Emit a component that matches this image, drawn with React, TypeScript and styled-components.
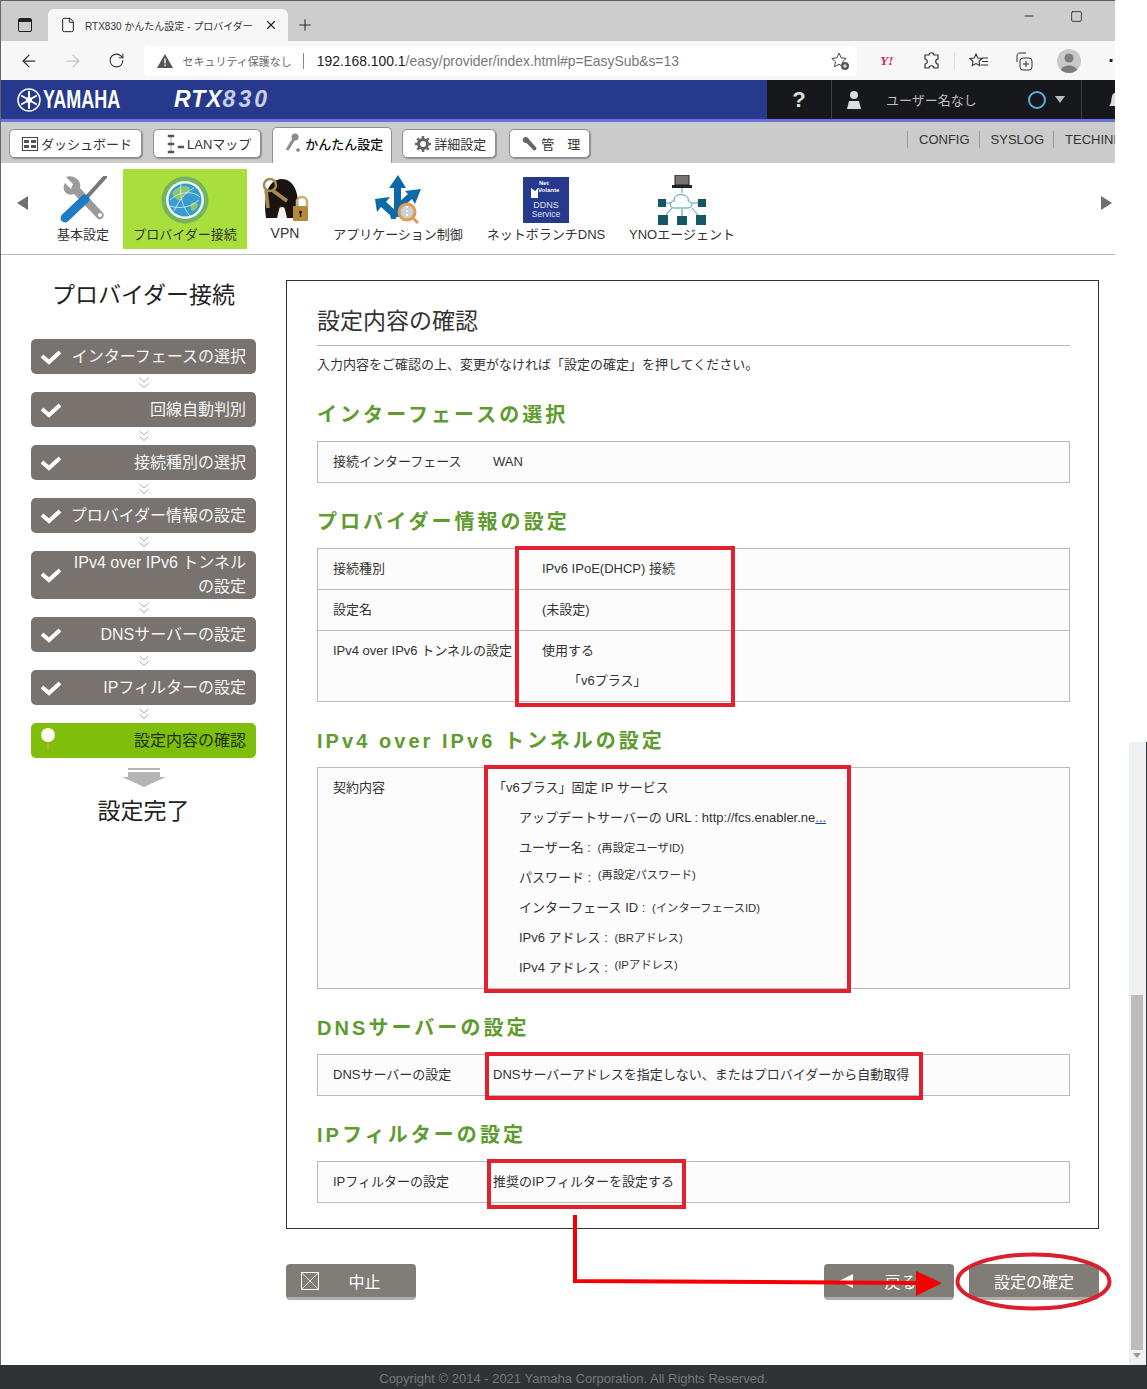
import styled, { createGlobalStyle } from "styled-components";
import { ArrowLeft, ArrowRight, File, Minus, Plus, RotateCw, Square, X } from "lucide-react";

const FONT = `"Liberation Sans", "Noto Sans CJK JP", sans-serif`;

const GlobalStyle = createGlobalStyle`
  html, body { margin: 0; padding: 0; background: #fff; }
  body { font-family: ${FONT}; color: #333; }
  * { box-sizing: border-box; }
`;

const steps = [
  { label: "インターフェースの選択" },
  { label: "回線自動判別" },
  { label: "接続種別の選択" },
  { label: "プロバイダー情報の設定" },
  { label: "IPv4 over IPv6 トンネル", second: "の設定" },
  { label: "DNSサーバーの設定" },
  { label: "IPフィルターの設定" },
];

function ToolsIcon() {
  return (
    <svg width="48" height="48" viewBox="0 0 48 48">
      <path d="M7 1l7 7-2 5-6-6C2 13 7 21 15 18l23 24c3 4 9-1 6-5L21 12C23 5 15-2 7 1z" fill="#9b9b9b" />
      <circle cx="41" cy="39" r="2" fill="#fff" />
      <path d="M46 1L28 21" stroke="#777" strokeWidth="4" strokeLinecap="round" />
      <path d="M26 23L6 42" stroke="#1d7cc4" strokeWidth="9" strokeLinecap="round" />
    </svg>
  );
}

function GlobeIcon() {
  return (
    <svg width="48" height="48" viewBox="0 0 48 48">
      <circle cx="24" cy="24" r="23.5" fill="#75b35c" />
      <circle cx="24" cy="24" r="19" fill="#eef8f2" />
      <circle cx="24" cy="24" r="16.5" fill="#3a9bd0" />
      <path d="M11 17c4-6 12-8 17-6 2 4-1 7-5 8-1 4-3 6-6 5-3-1-5-4-6-7zM31 27c3-1 6 0 6 2-1 4-4 6-6 6-2-2-2-6 0-8z" fill="#8cc76d" />
      <path d="M9 24c8-8 22-10 30-3M13 35c4-9 11-19 20-23M20 8c-2 11 2 24 9 32M9 30c9 3 20 2 29-6" stroke="#d6f0f2" strokeWidth="0.8" fill="none" />
    </svg>
  );
}

function VpnIcon() {
  return (
    <svg width="48" height="48" viewBox="0 0 48 48">
      <path d="M5 42C2 22 6 4 20 3c13 0 19 13 17 39z" fill="#1b1410" />
      <circle cx="21" cy="34" r="3" fill="#f4f1ec" />
      <path d="M16 42l2-8h6l2 8z" fill="#f4f1ec" />
      <circle cx="9" cy="9" r="6" fill="none" stroke="#a58a52" strokeWidth="2.5" />
      <path d="M11 14l15 11M5 14l2 18" stroke="#a58a52" strokeWidth="3.5" />
      <path d="M36 30v-4a5 5 0 0 1 10 0v4" fill="none" stroke="#c6ae76" strokeWidth="2.5" />
      <rect x="32" y="30" width="15" height="15" rx="1" fill="#b18a3e" />
      <circle cx="39.5" cy="36" r="1.6" fill="#2b1e0c" />
      <rect x="38.8" y="36" width="1.5" height="5" fill="#2b1e0c" />
    </svg>
  );
}

function AppIcon() {
  return (
    <svg width="50" height="50" viewBox="0 0 50 50">
      <path d="M25 0l8 13h-5v29h-7V13h-5z" fill="#0e6aa6" />
      <path d="M2 24l15-2-4 5 10 9v8h-5l-1-4-9-8-4 5zM48 14l-6 15-3-5-9 8-5-4 10-9-3-3z" fill="#0e6aa6" />
      <circle cx="34" cy="37" r="8" fill="#c9d2d2" stroke="#dd9a58" strokeWidth="3" />
      <path d="M34 31v12" stroke="#fff" strokeWidth="1.5" strokeDasharray="2 2" />
      <path d="M40 43l5 5" stroke="#dd9a58" strokeWidth="3" />
    </svg>
  );
}

function DdnsIcon() {
  return (
    <svg width="46" height="46" viewBox="0 0 46 46" fontFamily="Liberation Sans, sans-serif">
      <rect width="46" height="46" fill="#26398c" />
      <path d="M8 11l4 3 3-3v10H8z" fill="#fff" />
      <text x="16" y="8" fontSize="6" fontWeight="700" fill="#fff">Net</text>
      <text x="15" y="15" fontSize="6" fontWeight="700" fill="#fff">Volante</text>
      <text x="23" y="31" fontSize="9" fill="#dfe3f3" textAnchor="middle">DDNS</text>
      <text x="23" y="40" fontSize="8.5" fill="#dfe3f3" textAnchor="middle">Service</text>
    </svg>
  );
}

function YnoIcon() {
  return (
    <svg width="50" height="50" viewBox="0 0 50 50">
      <rect x="18" y="0" width="14" height="10" fill="#77736f" stroke="#222" strokeWidth="1" />
      <rect x="15" y="10" width="20" height="3" fill="#222" />
      <path d="M25 13v5M25 34v7M9 28h6M35 28h6M15 33l-6 7M35 33l6 7" stroke="#3f9aa8" strokeWidth="1" />
      <path d="M17 33c-5 0-5-7 0-7 0-5 5-8 9-6 4 0 6 3 5 6 5 0 5 7 0 7z" fill="#fff" stroke="#3f9aa8" strokeWidth="1" />
      <rect x="1" y="24" width="8" height="8" fill="#155764" />
      <rect x="41" y="24" width="8" height="8" fill="#155764" />
      <rect x="1" y="40" width="10" height="10" fill="#155764" />
      <rect x="20" y="41" width="10" height="9" fill="#155764" />
      <rect x="39" y="40" width="10" height="10" fill="#155764" />
    </svg>
  );
}

function CheckIcon() {
  return (
    <svg width="22" height="16" viewBox="0 0 22 16">
      <path d="M2 7l7 6L20 3" fill="none" stroke="#fff" strokeWidth="4" />
    </svg>
  );
}

function DoubleChevron() {
  return (
    <svg width="12" height="12" viewBox="0 0 12 12">
      <path d="M1.5 1l4.5 4 4.5-4M1.5 6.5l4.5 4 4.5-4" fill="none" stroke="#aaa" strokeWidth="1" />
    </svg>
  );
}

function Annotations() {
  return (
    <Overlay width="1147" height="1389" viewBox="0 0 1147 1389">
      <line x1="0.5" y1="0" x2="0.5" y2="1365" stroke="#666" />
      <g fill="none" stroke="#e2202f" strokeWidth="4">
        <rect x="517" y="548" width="216" height="157" />
        <rect x="486" y="767" width="363" height="224" />
        <rect x="487" y="1054" width="434" height="44" />
        <rect x="489" y="1161" width="195" height="46" />
      </g>
      <path d="M575 1215v66l342 2" fill="none" stroke="#f40000" strokeWidth="4" />
      <path d="M916 1271l26 12-26 13z" fill="#f40000" />
      <ellipse cx="1033.5" cy="1281.5" rx="76" ry="27" fill="none" stroke="#dc1f2e" strokeWidth="4" />
    </Overlay>
  );
}

export default function App() {
  return (
    <Page>
      <GlobalStyle />
      <Viewport>
        <TabStrip>
          <WindowIcon />
          <BrowserTab>
            <File size={16} strokeWidth={1.5} />
            <TabTitle>RTX830 かんたん設定 - プロバイダー</TabTitle>
            <X size={14} strokeWidth={2} />
          </BrowserTab>
          <Plus size={18} strokeWidth={1.3} />
          <WindowControls>
            <Minus size={14} strokeWidth={1.5} />
            <Square size={13} strokeWidth={1.5} />
          </WindowControls>
        </TabStrip>

        <Toolbar>
          <ToolButton><ArrowLeft size={20} strokeWidth={1.5} /></ToolButton>
          <ToolButton $dim><ArrowRight size={20} strokeWidth={1.5} /></ToolButton>
          <ToolButton><RotateCw size={17} strokeWidth={1.5} /></ToolButton>
          <AddressBar>
            <svg width="18" height="16" viewBox="0 0 18 16">
              <path d="M9 1l8 14H1z" fill="#555" />
              <path d="M9 5.5v5M9 11.5v1.5" stroke="#fff" strokeWidth="1.4" />
            </svg>
            <SecurityText>セキュリティ保護なし</SecurityText>
            <AddressDivider />
            <Url><b>192.168.100.1</b>/easy/provider/index.html#p=EasySub&s=13</Url>
            <svg width="20" height="20" viewBox="0 0 20 20">
              <path d="M9 2l2.2 4.8 5 .6-3.700 3.400 1 5-4.500-2.500-4.500 2.500 1-5L1.800 7.400l5-.6z" fill="none" stroke="#444" />
              <circle cx="15" cy="15" r="4" fill="#555" />
              <path d="M13 15h4M15 13v4" stroke="#fff" />
            </svg>
          </AddressBar>
          <YahooMark>Y!</YahooMark>
          <ToolSlot $w={44}>
            <svg width="18" height="18" viewBox="0 0 18 18">
              <path d="M6 3c0-3 5-3 5 0h4v4c-3 0-3 5 0 5v4h-4c0-3-5-3-5 0H2v-4c3 0 3-5 0-5V3z" fill="none" stroke="#333" strokeWidth="1.200" />
            </svg>
          </ToolSlot>
          <ToolbarDivider />
          <ToolSlot $w={49}>
            <svg width="20" height="18" viewBox="0 0 20 18">
              <path d="M7 2l1.800 4 4.200.4-3 2.900.8 4.200L7 11.500 3.200 13.500 4 9.300 1 6.400 5.200 6z" fill="none" stroke="#333" strokeWidth="1.100" />
              <path d="M13 6h6M13 9.500h6M12 13h7" stroke="#333" />
            </svg>
          </ToolSlot>
          <ToolSlot $w={40}>
            <svg width="20" height="20" viewBox="0 0 20 20">
              <path d="M3 11V5c0-2 1-3 3-3h6M2 14" fill="none" stroke="#333" />
              <rect x="6" y="7" width="12" height="12" rx="3" fill="none" stroke="#333" />
              <path d="M12 10v6M9 13h6" stroke="#333" />
            </svg>
          </ToolSlot>
          <ToolSlot $w={52}>
            <svg width="24" height="24" viewBox="0 0 24 24">
              <circle cx="12" cy="12" r="12" fill="#c8c8c8" />
              <circle cx="12" cy="9" r="4.500" fill="#7d7d7d" />
              <path d="M4 21c1-6 15-6 16 0-4 4-12 4-16 0z" fill="#7d7d7d" />
            </svg>
          </ToolSlot>
          <MoreDots>·</MoreDots>
        </Toolbar>

        <Header>
          <Brand>
            <svg width="24" height="24" viewBox="0 0 24 24">
              <circle cx="12" cy="12" r="11" fill="none" stroke="#fff" strokeWidth="1.500" />
              <circle cx="12" cy="12" r="3" fill="#fff" />
              <path d="M12 3v18M4.200 7.500l15.600 9M4.200 16.500l15.600-9" stroke="#fff" strokeWidth="2" />
            </svg>
            <BrandName>YAMAHA</BrandName>
            <ModelName>RTX<ModelDigits>830</ModelDigits></ModelName>
          </Brand>
          <StatusPanel>
            <HelpCell>?</HelpCell>
            <UserCell>
              <svg width="14" height="18" viewBox="0 0 14 18">
                <circle cx="7" cy="4" r="4" fill="#ddd" />
                <path d="M0 18l2-8h10l2 8z" fill="#ddd" />
              </svg>
              <UserName>ユーザー名なし</UserName>
              <StatusRing />
              <Caret />
            </UserCell>
            <BellCell>
              <svg width="24" height="22" viewBox="0 0 24 22">
                <path d="M3 17c3-3 2-6 3-10 1-5 11-5 12 0 1 4 0 7 3 10z" fill="#ddd" />
              </svg>
            </BellCell>
          </StatusPanel>
        </Header>

        <NavBar>
          <NavTab>
            <svg width="16" height="14" viewBox="0 0 16 14">
              <rect x="0.500" y="0.500" width="15" height="13" fill="none" stroke="#444" />
              <path d="M2 3h5v3H2zM9 3h5v3H9zM2 8h5v3H2zM9 8h5v3H9z" fill="#555" />
            </svg>
            ダッシュボード
          </NavTab>
          <NavTab>
            <svg width="18" height="20" viewBox="0 0 18 20">
              <path d="M2 1h6v2H2zM2 17h6v2H2zM2 9h6v2H2zM12 12h6v2h-6zM5 3v14" fill="#555" stroke="#555" strokeWidth="0.500" />
            </svg>
            LANマップ
          </NavTab>
          <NavTab $active>
            <svg width="18" height="20" viewBox="0 0 18 20">
              <circle cx="11" cy="4" r="3.500" fill="#8a8a8a" />
              <path d="M10 6L3 17" stroke="#8a8a8a" strokeWidth="3" />
              <path d="M14 15v4M12 17h4" stroke="#555" />
            </svg>
            かんたん設定
          </NavTab>
          <NavTab $mr={13}>
            <svg width="16" height="16" viewBox="0 0 16 16">
              <circle cx="8" cy="8" r="4.500" fill="none" stroke="#666" strokeWidth="3" />
              <path d="M8 0v3M8 13v3M0 8h3M13 8h3M2.300 2.300l2.100 2.100M11.600 11.600l2.100 2.100M2.300 13.700l2.100-2.100M11.600 4.400l2.100-2.100" stroke="#666" strokeWidth="2.500" />
            </svg>
            詳細設定
          </NavTab>
          <NavTab>
            <svg width="16" height="16" viewBox="0 0 18 18">
              <path d="M1 3c2-3 6-2 7 1l8 9c1 3-2 4-3 3L5 8C3 8 0 6 1 3z" fill="#666" />
            </svg>
            管　理
          </NavTab>
          <NavLinks>
            <NavLink>CONFIG</NavLink>
            <NavLink>SYSLOG</NavLink>
            <NavLink>TECHINFO</NavLink>
          </NavLinks>
        </NavBar>

        <CategoryBar>
          <CategoryArrow>
            <svg width="12" height="14" viewBox="0 0 12 14"><path d="M11 0v14L0 7z" fill="#6f6f6f" /></svg>
          </CategoryArrow>
          <Category $w={80}><IconSlot><ToolsIcon /></IconSlot>基本設定</Category>
          <Category $w={124} $active><IconSlot><GlobeIcon /></IconSlot>プロバイダー接続</Category>
          <Category $w={76}><IconSlot><VpnIcon /></IconSlot><VpnLabel>VPN</VpnLabel></Category>
          <Category $w={150}><IconSlot><AppIcon /></IconSlot>アプリケーション制御</Category>
          <Category $w={146}><IconSlot><DdnsIcon /></IconSlot>ネットボランチDNS</Category>
          <Category $w={126}><IconSlot><YnoIcon /></IconSlot>YNOエージェント</Category>
          <CategoryArrow $right>
            <svg width="12" height="14" viewBox="0 0 12 14"><path d="M1 0v14L12 7z" fill="#6f6f6f" /></svg>
          </CategoryArrow>
        </CategoryBar>

        <Main>
          <Sidebar>
            <SideTitle>プロバイダー接続</SideTitle>
            {steps.map((step) => (
              <div key={step.label}>
                <Step>
                  <CheckIcon />
                  <StepText>
                    {step.label}
                    {step.second && <><br />{step.second}</>}
                  </StepText>
                </Step>
                <StepGap><DoubleChevron /></StepGap>
              </div>
            ))}
            <Step $current>
              <svg width="16" height="28" viewBox="0 0 16 28">
                <path d="M8 12v11" stroke="#c9a15a" strokeWidth="1.500" />
                <circle cx="8" cy="8" r="7" fill="#fdfdf0" />
              </svg>
              <StepText>設定内容の確認</StepText>
            </Step>
            <DoneArrow>
              <svg width="44" height="20" viewBox="0 0 44 20">
                <path d="M6 0h32v2H6zM6 4h32v5h6L22 19 0 9h6z" fill="#b4b4b4" />
              </svg>
            </DoneArrow>
            <DoneLabel>設定完了</DoneLabel>
          </Sidebar>

          <Content>
            <Card>
              <CardTitle>設定内容の確認</CardTitle>
              <Lead>入力内容をご確認の上、変更がなければ「設定の確定」を押してください。</Lead>

              <Heading>インターフェースの選択</Heading>
              <InfoTable>
                <InfoRow $label={175}><div>接続インターフェース</div><div>WAN</div></InfoRow>
              </InfoTable>

              <Heading>プロバイダー情報の設定</Heading>
              <InfoTable>
                <InfoRow $label={224}><div>接続種別</div><div>IPv6 IPoE(DHCP) 接続</div></InfoRow>
                <InfoRow $label={224}><div>設定名</div><div>(未設定)</div></InfoRow>
                <InfoRow $label={224}>
                  <div>IPv4 over IPv6 トンネルの設定</div>
                  <div>
                    使用する
                    <SubLine>「v6プラス」</SubLine>
                  </div>
                </InfoRow>
              </InfoTable>

              <Heading>IPv4 over IPv6 トンネルの設定</Heading>
              <InfoTable>
                <InfoRow $label={175}>
                  <div>契約内容</div>
                  <div>
                    「v6プラス」固定 IP サービス
                    <SubLine>アップデートサーバーの URL : http://fcs.enabler.ne<MoreLink>...</MoreLink></SubLine>
                    <SubLine>ユーザー名 : <Masked>(再設定ユーザID)</Masked></SubLine>
                    <SubLine>パスワード : <Masked $raised>(再設定パスワード)</Masked></SubLine>
                    <SubLine>インターフェース ID : <Masked>(インターフェースID)</Masked></SubLine>
                    <SubLine>IPv6 アドレス : <Masked>(BRアドレス)</Masked></SubLine>
                    <SubLine>IPv4 アドレス : <Masked $raised>(IPアドレス)</Masked></SubLine>
                  </div>
                </InfoRow>
              </InfoTable>

              <Heading>DNSサーバーの設定</Heading>
              <InfoTable>
                <InfoRow $label={175}><div>DNSサーバーの設定</div><div>DNSサーバーアドレスを指定しない、またはプロバイダーから自動取得</div></InfoRow>
              </InfoTable>

              <Heading>IPフィルターの設定</Heading>
              <InfoTable>
                <InfoRow $label={175}><div>IPフィルターの設定</div><div>推奨のIPフィルターを設定する</div></InfoRow>
              </InfoTable>
            </Card>

            <ActionBar>
              <ActionButton>
                <svg width="18" height="18" viewBox="0 0 18 18">
                  <rect x="0.500" y="0.500" width="17" height="17" fill="none" stroke="#fff" />
                  <path d="M1 1l16 16M17 1L1 17" stroke="#fff" strokeWidth="0.800" />
                </svg>
                <ActionLabel>中止</ActionLabel>
              </ActionButton>
              <ActionGroup>
                <ActionButton>
                  <svg width="14" height="14" viewBox="0 0 14 14"><path d="M14 0v14L0 7z" fill="#fff" /></svg>
                  <ActionLabel>戻る</ActionLabel>
                </ActionButton>
                <ActionButton><ActionLabel $only>設定の確定</ActionLabel></ActionButton>
              </ActionGroup>
            </ActionBar>
          </Content>
        </Main>
      </Viewport>
      <Footer>Copyright © 2014 - 2021 Yamaha Corporation. All Rights Reserved.</Footer>
      <ScrollTrack>
        <ScrollThumb />
        <ScrollDown />
      </ScrollTrack>
      <Annotations />
    </Page>
  );
}

const Page = styled.div`
  position: relative;
  display: flex;
  flex-direction: column;
  width: 1147px;
  height: 1389px;
  overflow: hidden;
  background: #fff;
`;

const Viewport = styled.div`
  flex: 1;
  width: 1115px;
  min-height: 0;
  overflow: hidden;
`;

const Overlay = styled.svg`
  position: absolute;
  top: 0;
  left: 0;
  pointer-events: none;
`;

const TabStrip = styled.div`
  display: flex;
  align-items: flex-end;
  height: 41px;
  padding-left: 18px;
  background: #cdcdcd;
  border-top: 1px solid #5a6066;
  color: #222;
  > svg:last-of-type { align-self: center; margin: 8px 0 0 8px; }
`;

const WindowIcon = styled.div`
  align-self: center;
  width: 14px;
  height: 14px;
  margin: 8px 16px 0 0;
  border: 1.500px solid #222;
  border-top-width: 4px;
  border-radius: 2px;
`;

const BrowserTab = styled.div`
  display: flex;
  align-items: center;
  gap: 9px;
  width: 240px;
  height: 32px;
  padding: 0 10px 0 12px;
  background: #f7f7f7;
  border-radius: 6px 6px 0 0;
`;

const TabTitle = styled.span`
  flex: 1;
  font-size: 10px;
  white-space: nowrap;
  color: #333;
`;

const WindowControls = styled.div`
  display: flex;
  align-items: center;
  gap: 34px;
  margin: 0 32px 18px auto;
`;

const Toolbar = styled.div`
  display: flex;
  align-items: center;
  height: 39px;
  padding-left: 7px;
  background: #f7f7f7;
  color: #333;
`;

const ToolButton = styled.div<{ $dim?: boolean }>`
  display: flex;
  align-items: center;
  justify-content: center;
  width: 44px;
  color: ${(p) => (p.$dim ? "#c4c4c4" : "#333")};
`;

const AddressBar = styled.div`
  display: flex;
  align-items: center;
  width: 716px;
  height: 30px;
  margin-left: 6px;
  padding: 0 7px 0 12px;
  background: #fff;
  border-radius: 5px;
`;

const SecurityText = styled.span`
  margin-left: 8px;
  font-size: 11px;
  white-space: nowrap;
  color: #666;
`;

const AddressDivider = styled.span`
  width: 1px;
  height: 16px;
  margin: 0 13px 0 11px;
  background: #888;
`;

const Url = styled.span`
  flex: 1;
  font-size: 13.900px;
  white-space: nowrap;
  color: #777;
  b { font-weight: 400; color: #222; }
`;

const YahooMark = styled.span`
  width: 53px;
  padding-left: 23px;
  font-family: "Liberation Serif", serif;
  font-size: 13px;
  font-weight: 700;
  font-style: italic;
  color: #d5204f;
`;

const ToolSlot = styled.div<{ $w: number }>`
  display: flex;
  align-items: center;
  justify-content: center;
  width: ${(p) => p.$w}px;
`;

const ToolbarDivider = styled.span`
  width: 1px;
  height: 18px;
  background: #ddd;
`;

const MoreDots = styled.span`
  margin-left: 13px;
  font-size: 20px;
  font-weight: 700;
  color: #222;
`;

const Header = styled.header`
  display: flex;
  justify-content: space-between;
  height: 42px;
  background: #26398c;
  border-bottom: 3px solid #6b6fd8;
`;

const Brand = styled.div`
  display: flex;
  align-items: center;
  padding-left: 17px;
  color: #fff;
`;

const BrandName = styled.span`
  display: inline-block;
  width: 131px;
  margin-left: 2px;
  font-size: 25px;
  font-weight: 700;
  transform: scaleX(0.72);
  transform-origin: left center;
`;

const ModelName = styled.span`
  font-size: 23px;
  font-weight: 700;
  font-style: italic;
  letter-spacing: 1px;
`;

const ModelDigits = styled.span`
  color: #c7cde6;
  letter-spacing: 3px;
`;

const StatusPanel = styled.div`
  display: flex;
  width: 348px;
  overflow: hidden;
  background: #17181c;
`;

const HelpCell = styled.div`
  flex: none;
  width: 65px;
  padding-top: 7px;
  border-right: 1px solid #3d3d42;
  font-size: 22px;
  font-weight: 700;
  text-align: center;
  color: #ddd;
`;

const UserCell = styled.div`
  display: flex;
  flex: none;
  align-items: center;
  width: 250px;
  padding-left: 15px;
  border-right: 1px solid #3d3d42;
`;

const UserName = styled.span`
  width: 142px;
  margin-left: 25px;
  font-size: 13px;
  color: #bdbdbd;
`;

const StatusRing = styled.span`
  width: 18px;
  height: 18px;
  border: 2px solid #5cb0de;
  border-radius: 50%;
`;

const Caret = styled.span`
  margin-left: 9px;
  border-top: 7px solid #bbb;
  border-left: 5px solid transparent;
  border-right: 5px solid transparent;
`;

const BellCell = styled.div`
  display: flex;
  flex: none;
  align-items: center;
  padding-left: 24px;
`;

const NavBar = styled.nav`
  display: flex;
  align-items: flex-start;
  height: 41px;
  padding: 7px 0 0 9px;
  background: #cbcbcb;
`;

const NavTab = styled.div<{ $active?: boolean; $mr?: number }>`
  display: flex;
  align-items: center;
  gap: 3px;
  height: ${(p) => (p.$active ? "36px" : "29px")};
  margin-top: ${(p) => (p.$active ? "-2px" : "0")};
  margin-right: ${(p) => (p.$active ? 10 : p.$mr ?? 11)}px;
  padding: ${(p) => (p.$active ? "0 8px 5px 11px" : "0 9px 0 12px")};
  background: #fff;
  border: 1px solid #8f8f8f;
  border-bottom: ${(p) => (p.$active ? "none" : "1px solid #8f8f8f")};
  border-radius: ${(p) => (p.$active ? "5px 5px 0 0" : "5px")};
  box-shadow: ${(p) => (p.$active ? "none" : "1px 1px 1px #8f8f8f")};
  font-size: 13px;
  font-weight: ${(p) => (p.$active ? 500 : 400)};
  color: ${(p) => (p.$active ? "#111" : "#333")};
  white-space: nowrap;
`;

const NavLinks = styled.div`
  display: flex;
  margin-left: auto;
  margin-top: 2px;
  overflow: hidden;
  width: 208px;
`;

const NavLink = styled.span`
  flex: none;
  padding: 0 9px 0 11px;
  border-left: 1px solid #999;
  font-size: 13px;
  line-height: 17px;
  color: #333;
`;

const CategoryBar = styled.div`
  display: flex;
  align-items: flex-start;
  height: 92px;
  padding-top: 6px;
  background: #fff;
  border-bottom: 1px solid #bbb;
`;

const CategoryArrow = styled.div<{ $right?: boolean }>`
  display: flex;
  width: 43px;
  height: 68px;
  align-items: center;
  padding-left: ${(p) => (p.$right ? "0" : "17px")};
  margin-left: ${(p) => (p.$right ? "auto" : "0")};
  justify-content: ${(p) => (p.$right ? "flex-end" : "flex-start")};
  padding-right: ${(p) => (p.$right ? "3px" : "0")};
`;

const Category = styled.div<{ $w: number; $active?: boolean }>`
  display: flex;
  flex-direction: column;
  align-items: center;
  width: ${(p) => p.$w}px;
  height: 80px;
  padding-top: 6px;
  background: ${(p) => (p.$active ? "#a8df3c" : "transparent")};
  font-size: 13px;
  line-height: 20px;
  color: #333;
  white-space: nowrap;
`;

const IconSlot = styled.div`
  display: flex;
  align-items: center;
  justify-content: center;
  height: 50px;
  margin-bottom: 0;
`;

const VpnLabel = styled.span`
  margin-top: -2px;
  font-size: 14px;
`;

const Main = styled.main`
  display: flex;
`;

const Sidebar = styled.aside`
  width: 286px;
  flex: none;
  padding: 25px 30px 0 31px;
`;

const SideTitle = styled.div`
  height: 30px;
  margin-bottom: 29px;
  font-size: 23px;
  line-height: 30px;
  text-align: center;
  white-space: nowrap;
  color: #222;
`;

const Step = styled.div<{ $current?: boolean }>`
  display: flex;
  align-items: center;
  min-height: 35px;
  padding: 0 10px 0 9px;
  background: ${(p) => (p.$current ? "#7fbe0b" : "#78736e")};
  border-radius: 5px;
  font-size: 16px;
  line-height: 24px;
  color: ${(p) => (p.$current ? "#1c3204" : "#f5f5f5")};
`;

const StepText = styled.div`
  flex: 1;
  text-align: right;
  white-space: nowrap;
`;

const StepGap = styled.div`
  display: flex;
  align-items: center;
  justify-content: center;
  height: 18px;
`;

const DoneArrow = styled.div`
  display: flex;
  justify-content: center;
  margin-top: 10px;
`;

const DoneLabel = styled.div`
  margin-top: 8px;
  font-size: 23px;
  line-height: 30px;
  text-align: center;
  color: #222;
`;

const Content = styled.div`
  width: 813px;
  padding-top: 25px;
`;

const Card = styled.section`
  padding: 25px 28px 25px 30px;
  background: #fff;
  border: 1px solid #333;
`;

const CardTitle = styled.h2`
  margin: 0;
  padding-bottom: 9px;
  border-bottom: 1px solid #bbb;
  font-size: 23px;
  font-weight: 400;
  line-height: 30px;
  color: #333;
`;

const Lead = styled.p`
  margin: 9px 0 26px;
  font-size: 13px;
  line-height: 20px;
`;

const Heading = styled.h3`
  margin: 25px 0 12px;
  font-size: 20px;
  font-weight: 700;
  line-height: 28px;
  letter-spacing: 3.050px;
  color: #5f9b2f;
`;

const InfoTable = styled.div`
  width: 753px;
  background: #fcfcfc;
  border: 1px solid #bbb;
`;

const InfoRow = styled.div<{ $label: number }>`
  display: grid;
  grid-template-columns: ${(p) => p.$label}px 1fr;
  padding: 5px 0 5px 15px;
  font-size: 13px;
  line-height: 30px;
  color: #333;
  white-space: nowrap;
  & + & { border-top: 1px solid #bbb; }
  > div:first-child { margin-right: -15px; }
  > div:last-child { margin-left: -15px; }
`;

const SubLine = styled.div`
  height: 30px;
  padding-left: 26px;
`;

const Masked = styled.span<{ $raised?: boolean }>`
  display: inline-block;
  height: 30px;
  margin-left: 3px;
  font-size: 11.300px;
  transform: translateY(${(p) => (p.$raised ? "-3px" : "0")});
`;

const MoreLink = styled.span`
  color: #1a3fa8;
  text-decoration: underline;
`;

const ActionBar = styled.div`
  display: flex;
  justify-content: space-between;
  margin-top: 35px;
`;

const ActionGroup = styled.div`
  display: flex;
  gap: 15px;
`;

const ActionButton = styled.div`
  display: flex;
  align-items: center;
  width: 130px;
  height: 36px;
  padding-left: 15px;
  background: #807c76;
  border-bottom: 3px solid #b0aeab;
  border-radius: 4px;
`;

const ActionLabel = styled.span<{ $only?: boolean }>`
  flex: 1;
  padding-right: ${(p) => (p.$only ? "15px" : "6px")};
  font-size: 16px;
  text-align: center;
  color: #fff;
`;

const Footer = styled.footer`
  height: 24px;
  background: #303335;
  font-size: 13px;
  line-height: 27px;
  text-align: center;
  color: #777;
`;

const ScrollTrack = styled.div`
  position: absolute;
  top: 742px;
  left: 1129px;
  display: flex;
  flex-direction: column;
  justify-content: flex-end;
  width: 18px;
  height: 623px;
  padding: 0 3px 0 2px;
  background: #eff0f2;
  border-right: 1px solid #33383c;
`;

const ScrollThumb = styled.div`
  height: 355px;
  margin-bottom: 3px;
  background: #bdbdbf;
`;

const ScrollDown = styled.div`
  align-self: center;
  margin-bottom: 7px;
  border-top: 5px solid #999;
  border-left: 4px solid transparent;
  border-right: 4px solid transparent;
`;
